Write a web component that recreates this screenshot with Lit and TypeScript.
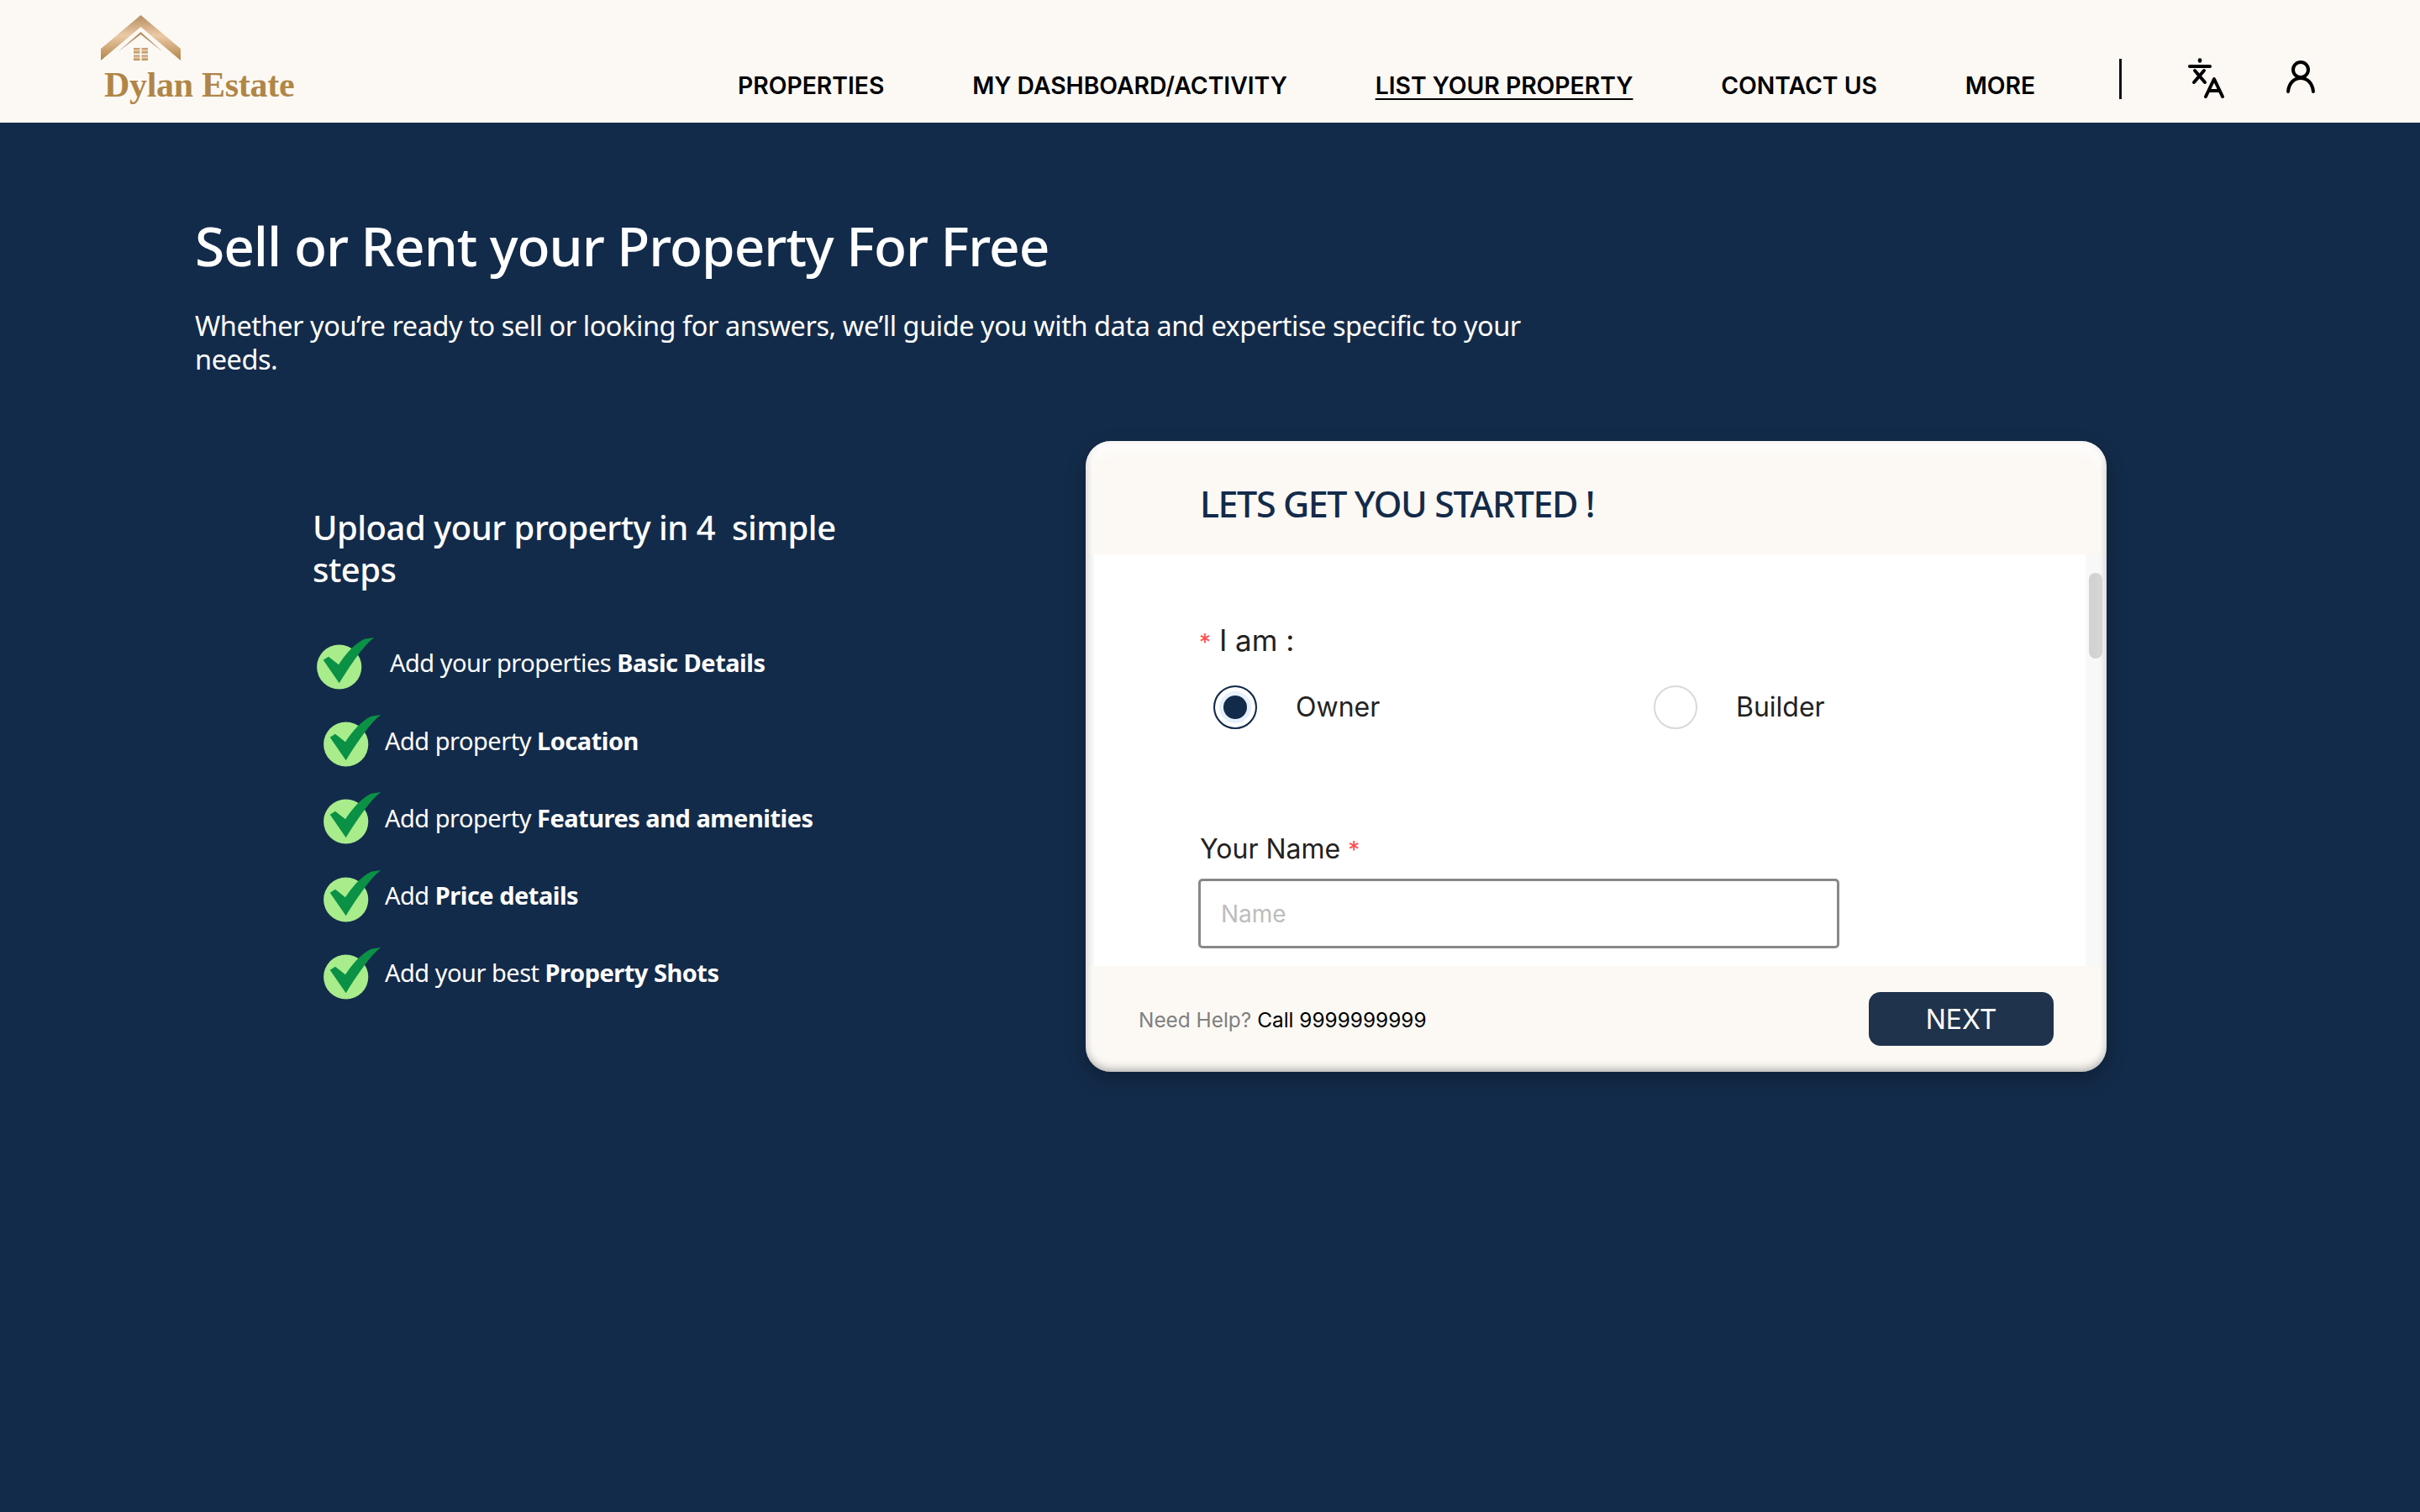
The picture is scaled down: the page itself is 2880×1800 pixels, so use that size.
import { LitElement, html, css, svg } from "lit";
import { customElement } from "lit/decorators.js";

const check = html`<svg class="chk" viewBox="0 0 70 62" width="70" height="62">
  <circle cx="26.7" cy="35" r="26.6" fill="#a8ec8c"></circle>
  <path d="M26.7 54.3 L7.7 26.7 L14 22.7 L26 32.3 C34 20 44 8 56.7 1.7 L68.3 0 C60 6 48 20 26.7 54.3 Z" fill="#0a9145"></path>
</svg>`;

const steps = [
  { pre: "Add your properties ", b: "Basic Details", first: true },
  { pre: "Add property ", b: "Location" },
  { pre: "Add property ", b: "Features and amenities" },
  { pre: "Add ", b: "Price details" },
  { pre: "Add your best ", b: "Property Shots" },
];

@customElement("app-root")
export class AppRoot extends LitElement {
  static styles = css`
    :host { display: block; min-height: 1800px; background: #132b4a; font-family: Inter, sans-serif; }
    * { box-sizing: border-box; }
    header { height: 146px; background: #fcf9f5; display: flex; position: relative; }
    .logo { width: 878px; padding: 18px 0 0 120px; flex: none; }
    .logo svg { display: block; }
    .logo-text { font-family: "Liberation Serif", serif; font-weight: 700; font-size: 42px; letter-spacing: -.3px; line-height: 50px; color: #b08647; margin: 0 0 0 4px; white-space: nowrap; }
    nav { display: flex; gap: 104.8px; padding-top: 84px; font-weight: 600; font-size: 28.3px; line-height: 36px; color: #000; white-space: nowrap; }
    .active { text-decoration: underline; text-underline-offset: 5px; text-decoration-thickness: 2px; }
    .divider { width: 3px; height: 48px; background: #111; margin: 70px 0 0 100px; flex: none; }
    .ic-tr { margin: 69px 0 0 78px; flex: none; }
    .ic-user { margin: 72px 0 0 69px; flex: none; }
    main { padding: 107px 0 0 232px; }
    h1 { margin: 0; font-family: "Noto Sans", sans-serif; font-weight: 500; font-size: 64px; letter-spacing: -1.05px; line-height: 80px; color: #fff; }
    .sub { margin: 35px 0 0; width: 1586px; font-family: "Noto Sans", sans-serif; font-size: 32.5px; letter-spacing: -.45px; line-height: 40px; color: #fff; }
    .cols { display: flex; margin-top: 77px; }
    .left { width: 1060px; padding: 78px 0 0 140px; flex: none; color: #fff; font-family: "Noto Sans", sans-serif; }
    h2 { margin: 0; width: 640px; font-weight: 500; font-size: 40px; letter-spacing: -.5px; line-height: 50px; }
    ul { list-style: none; margin: 40px 0 0; padding: 0; }
    li { display: flex; align-items: center; height: 92.2px; padding-left: 13px; gap: 3px; font-size: 29px; letter-spacing: -.5px; white-space: nowrap; }
    li.first { padding-left: 5px; gap: 17px; }
    li.first span { margin-top: -2px; }
    li b { font-weight: 700; }
    .chk { flex: none; margin-top: 2px; }
    .card { width: 1215px; height: 751px; border-radius: 30px; background: #fcf9f5; overflow: hidden; position: relative; display: flex; flex-direction: column; box-shadow: 0 8px 22px rgba(0,0,0,.28); }
    .card::after { content: ""; position: absolute; inset: 0; border-radius: 30px; pointer-events: none; box-shadow: inset 0 10px 16px rgba(255,255,255,.8), inset 0 -6px 9px rgba(0,0,0,.16), inset 3px 0 6px rgba(0,0,0,.12), inset -3px 0 6px rgba(0,0,0,.12); }
    .card-head { height: 135px; flex: none; padding: 50px 0 0 136px; font-family: "Noto Sans", sans-serif; font-weight: 500; font-size: 43px; letter-spacing: -1.4px; line-height: 50px; color: #132b4a; white-space: nowrap; }
    .card-body { flex: 1; display: flex; background: #f8f8f8; min-height: 0; padding-left: 10px; }
    .form { flex: 1; background: #fff; padding-top: 79px; padding-left: 126px; overflow: hidden; color: #222; }
    .track { width: 25px; flex: none; padding: 22px 5px 0 4px; }
    .thumb { height: 102px; background: #d2d2d2; border-radius: 8px; }
    .iam { font-size: 35px; line-height: 46px; margin-left: -1px; }
    .star { color: #ff4d4f; font-size: 28px; }
    .radios { display: flex; margin: 28px 0 0 16px; }
    .opt { display: flex; align-items: center; gap: 46px; width: 526px; font-size: 32px; line-height: 52px; }
    .opt:first-child { width: 526px; margin-right: 10px; }
    .radio { width: 52px; height: 52px; border-radius: 50%; border: 2px solid #d9d9d9; background: #fff; flex: none; }
    .radio.on { border-color: #132b4a; background: #132b4a; box-shadow: inset 0 0 0 5px #fff, inset 0 0 0 10px #e6f0ff; }
    .name-label { margin-top: 123px; font-size: 32px; line-height: 40px; }
    input { display: block; margin: 14px 0 0 -2px; width: 763px; height: 83px; border: 3px solid #888; border-radius: 5px; padding: 0 24px; font: 28px Inter, sans-serif; background: #fff; outline: none; }
    input::placeholder { color: #bdbdbd; }
    .card-foot { height: 126px; flex: none; display: flex; align-items: flex-start; padding: 31px 63px 0 63px; justify-content: space-between; }
    .help { margin-top: 18px; font-size: 24.4px; line-height: 30px; color: #808080; }
    .help span { color: #000; }
    button { width: 220px; height: 64px; border: 0; border-radius: 14px; background: #1f334d; color: #fff; font: 32px Inter, sans-serif; }
  `;

  render() {
    return html`
      <header>
        <div class="logo">
          <svg width="100" height="58" viewBox="0 0 100 58">
            <defs>
              <linearGradient id="g" x1="0" y1="0" x2="0" y2="1">
                <stop offset="0" stop-color="#b58d5e"></stop>
                <stop offset=".45" stop-color="#ecc9a7"></stop>
                <stop offset="1" stop-color="#b08647"></stop>
              </linearGradient>
            </defs>
            ${svg`<path d="M47.5 0 L95 40 L95 54 L47.5 14 L0 54 L0 40 Z" fill="url(#g)"></path>
            <path d="M47.5 20 L74 44 L47.5 23 L20 44 Z" fill="#b58d5e"></path>
            <g fill="url(#g)">
              <rect x="39" y="39" width="7.5" height="6.5"></rect><rect x="48.5" y="39" width="7.5" height="6.5"></rect>
              <rect x="39" y="47.5" width="7.5" height="6.5"></rect><rect x="48.5" y="47.5" width="7.5" height="6.5"></rect>
            </g>`}
          </svg>
          <div class="logo-text">Dylan Estate</div>
        </div>
        <nav>
          <span>PROPERTIES</span>
          <span>MY DASHBOARD/ACTIVITY</span>
          <span class="active">LIST YOUR PROPERTY</span>
          <span>CONTACT US</span>
          <span>MORE</span>
        </nav>
        <div class="divider"></div>
        <svg class="ic-tr" width="48" height="48" viewBox="0 0 48 48" fill="none" stroke="#000" stroke-width="4" stroke-linecap="round" stroke-linejoin="round">
          <path d="M3 10 H27"></path>
          <path d="M15 2.5 V3.5" stroke-width="4.5"></path>
          <path d="M9 15 L21 29 M20 15 L8 29"></path>
          <path d="M22 46 L32 25 L42 46 M25.5 39 H38.5"></path>
        </svg>
        <svg class="ic-user" width="36" height="40" viewBox="0 0 36 40" fill="none" stroke="#000" stroke-width="4" stroke-linecap="round">
          <circle cx="18" cy="11" r="9"></circle>
          <path d="M3 37 C4 27 10 21 18 21 C26 21 32 27 33 37"></path>
        </svg>
      </header>
      <main>
        <h1>Sell or Rent your Property For Free</h1>
        <p class="sub">Whether you’re ready to sell or looking for answers, we’ll guide you with data and expertise specific to your needs.</p>
        <div class="cols">
          <section class="left">
            <h2>Upload your property in 4&nbsp; simple steps</h2>
            <ul>
              ${steps.map(
                (s) => html`<li class=${s.first ? "first" : ""}>${check}<span>${s.pre}<b>${s.b}</b></span></li>`
              )}
            </ul>
          </section>
          <section class="card">
            <div class="card-head">LETS GET YOU STARTED !</div>
            <div class="card-body">
              <div class="form">
                <div class="iam"><span class="star">*</span> I am :</div>
                <div class="radios">
                  <label class="opt"><span class="radio on"></span>Owner</label>
                  <label class="opt"><span class="radio"></span>Builder</label>
                </div>
                <div class="name-label">Your Name <span class="star">*</span></div>
                <input placeholder="Name" />
              </div>
              <div class="track"><div class="thumb"></div></div>
            </div>
            <div class="card-foot">
              <div class="help">Need Help? <span>Call 9999999999</span></div>
              <button>NEXT</button>
            </div>
          </section>
        </div>
      </main>
    `;
  }
}
